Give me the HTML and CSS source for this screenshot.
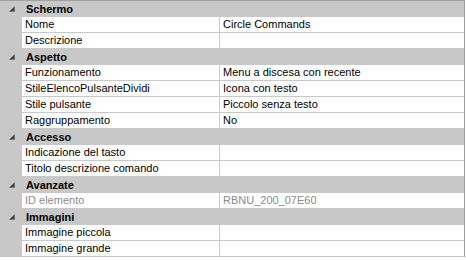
FILE: index.html
```html
<!DOCTYPE html>
<html lang="it">
<head>
    <meta charset="UTF-8">
    <title>Proprietà</title>
    <link rel="stylesheet" href="styles.css">
</head>
<body>
    <div class="grid">
        <div class="cat">
            <span class="gutter"><svg width="6" height="6" viewBox="0 0 6 6"><polygon points="5.5,0.5 5.5,5.5 0.5,5.5" fill="#3c3c3c" stroke="#6a6a6a" stroke-width="0.6"/></svg></span>
            <span class="cat-name">Schermo</span>
        </div>
        <div class="item"><span class="gutter"></span><span class="name">Nome</span><span class="value">Circle Commands</span></div>
        <div class="item"><span class="gutter"></span><span class="name">Descrizione</span><span class="value"></span></div>

        <div class="cat">
            <span class="gutter"><svg width="6" height="6" viewBox="0 0 6 6"><polygon points="5.5,0.5 5.5,5.5 0.5,5.5" fill="#3c3c3c" stroke="#6a6a6a" stroke-width="0.6"/></svg></span>
            <span class="cat-name">Aspetto</span>
        </div>
        <div class="item"><span class="gutter"></span><span class="name">Funzionamento</span><span class="value">Menu a discesa con recente</span></div>
        <div class="item"><span class="gutter"></span><span class="name">StileElencoPulsanteDividi</span><span class="value">Icona con testo</span></div>
        <div class="item"><span class="gutter"></span><span class="name">Stile pulsante</span><span class="value">Piccolo senza testo</span></div>
        <div class="item"><span class="gutter"></span><span class="name">Raggruppamento</span><span class="value">No</span></div>

        <div class="cat">
            <span class="gutter"><svg width="6" height="6" viewBox="0 0 6 6"><polygon points="5.5,0.5 5.5,5.5 0.5,5.5" fill="#3c3c3c" stroke="#6a6a6a" stroke-width="0.6"/></svg></span>
            <span class="cat-name">Accesso</span>
        </div>
        <div class="item"><span class="gutter"></span><span class="name">Indicazione del tasto</span><span class="value"></span></div>
        <div class="item"><span class="gutter"></span><span class="name">Titolo descrizione comando</span><span class="value"></span></div>

        <div class="cat">
            <span class="gutter"><svg width="6" height="6" viewBox="0 0 6 6"><polygon points="5.5,0.5 5.5,5.5 0.5,5.5" fill="#3c3c3c" stroke="#6a6a6a" stroke-width="0.6"/></svg></span>
            <span class="cat-name">Avanzate</span>
        </div>
        <div class="item disabled"><span class="gutter"></span><span class="name">ID elemento</span><span class="value">RBNU_200_07E60</span></div>

        <div class="cat">
            <span class="gutter"><svg width="6" height="6" viewBox="0 0 6 6"><polygon points="5.5,0.5 5.5,5.5 0.5,5.5" fill="#3c3c3c" stroke="#6a6a6a" stroke-width="0.6"/></svg></span>
            <span class="cat-name">Immagini</span>
        </div>
        <div class="item"><span class="gutter"></span><span class="name">Immagine piccola</span><span class="value"></span></div>
        <div class="item"><span class="gutter"></span><span class="name">Immagine grande</span><span class="value"></span></div>
    </div>
</body>
</html>
```

FILE: styles.css
```css
body {
    margin: 0;
    background-color: #fff;
    font-family: "Liberation Sans", Arial, sans-serif;
    font-size: 11px;
    color: #000;
}
.grid {
    width: 464px;
    border-top: 1px solid #a0a0a0;
    border-right: 1px solid #a0a0a0;
    background-color: #c8c8c8;
}
.cat {
    display: grid;
    grid-template-columns: 22px 1fr;
    height: 16px;
    line-height: 16px;
    font-weight: bold;
}
.gutter {
    display: flex;
    align-items: center;
    justify-content: center;
    padding-left: 1px;
}
.cat-name {
    padding-left: 4px;
}
.item {
    display: grid;
    grid-template-columns: 22px 198px 1fr;
    height: 16px;
}
.item .name,
.item .value {
    background-color: #fff;
    border-bottom: 1px solid #c8c8c8;
    line-height: 15px;
    white-space: nowrap;
    overflow: hidden;
}
.item .name {
    padding-left: 3px;
    border-right: 1px solid #c8c8c8;
}
.item .value {
    padding-left: 3px;
}
.item.disabled .name,
.item.disabled .value {
    color: #8c8c8c;
}
```
